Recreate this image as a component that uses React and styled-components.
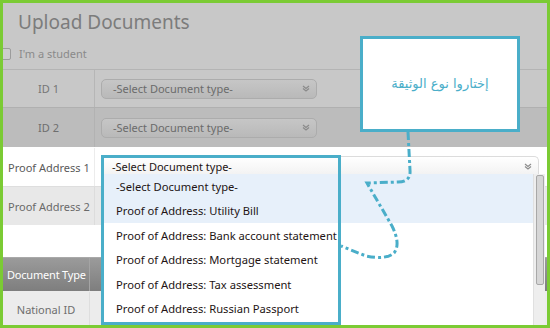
import React from 'react'
import styled, { createGlobalStyle } from 'styled-components'

const GlobalStyle = createGlobalStyle`
  html, body { margin: 0; padding: 0; background: #fff; }
  body { font-family: "Noto Sans", "DejaVu Sans", sans-serif; }
`

const Frame = styled.div`
  position: relative;
  width: 550px;
  height: 328px;
  box-sizing: border-box;
  border: 3px solid #7bcb34;
  overflow: hidden;
  background: #fff;
`

const Dimmed = styled.div`
  background: #c8c8c8;
`

const Title = styled.h1`
  margin: 0;
  padding: 7px 0 0 15px;
  height: 35px;
  box-sizing: border-box;
  font-size: 19px;
  font-weight: 400;
  color: #7c7c7c;
  line-height: 24px;
`

const StudentRow = styled.label`
  display: flex;
  align-items: center;
  gap: 8px;
  height: 31px;
  margin-left: -4px;
  font-size: 11px;
  color: #8a8a8a;
`

const Check = styled.span`
  width: 10px;
  height: 10px;
  border: 1px solid #9c9c9c;
  border-radius: 2px;
  background: #cdcdcd;
`

const Row = styled.div`
  display: flex;
  height: ${p => p.$h || 38}px;
  background: ${p => p.$bg};
  border-top: 1px solid ${p => p.$line || 'transparent'};
`

const LabelCell = styled.div`
  width: ${p => p.$w || 92}px;
  flex-shrink: 0;
  display: flex;
  align-items: center;
  justify-content: ${p => (p.$left ? 'flex-start' : 'center')};
  padding-left: ${p => (p.$left ? 5 : 0)}px;
  box-sizing: border-box;
  border-right: 1px solid ${p => p.$divider};
  font-size: 11px;
  color: ${p => p.$color};
`

const SelectCell = styled.div`
  flex: 1;
  display: flex;
  align-items: center;
  padding-left: 6px;
`

const DimSelect = styled.div`
  width: 216px;
  height: 20px;
  box-sizing: border-box;
  border: 1px solid #acacac;
  border-radius: 5px;
  background: linear-gradient(#c6c6c6, #b9b9b9);
  display: flex;
  align-items: center;
  justify-content: space-between;
  padding: 0 6px 0 11px;
  font-size: 11px;
  color: #6b6b6b;
`

const OpenSelect = styled.div`
  position: relative;
  top: -1px;
  width: 438px;
  height: 20px;
  box-sizing: border-box;
  border-top: 1px solid #dcdcdc;
  border-right: 1px solid #dcdcdc;
  border-bottom: 1px solid #d6d0c6;
  border-top-right-radius: 5px;
  background: linear-gradient(#fff, #f2f2f2);
  display: flex;
  align-items: center;
  justify-content: space-between;
  padding: 0 6px 0 11px;
  font-size: 11px;
  color: #231414;
`

const Spacer = styled.div`
  height: 32px;
`

const HeadRow = styled.div`
  display: flex;
  height: 33px;
  background: linear-gradient(#9b9b9b, #7e7e7e);
  border-top: 1px solid #a9a9a9;
`

const HeadCell = styled.div`
  width: 82px;
  border-right: 1px solid #a4a4a4;
  display: flex;
  align-items: center;
  padding-left: 4px;
  font-size: 11px;
  letter-spacing: -0.2px;
  color: #fff;
`

const List = styled.div`
  position: absolute;
  left: 99px;
  top: 171px;
  width: 443px;
  height: 160px;
  background: #fff;
  display: flex;
`

const Items = styled.div`
  flex: 1;
`

const Item = styled.div`
  height: 24.5px;
  display: flex;
  align-items: center;
  padding-left: 14px;
  font-size: 11.2px;
  color: #231414;
  background: ${p => (p.$hl ? '#e7f0fa' : '#fff')};
`

const Track = styled.div`
  width: 12px;
  background: #eeeeee;
  border-left: 1px solid #e0e0e0;
  padding: 1px 1px 0 2px;
  box-sizing: border-box;
`

const Thumb = styled.div`
  height: 110px;
  box-sizing: border-box;
  border: 1px solid #a8a8a8;
  border-radius: 2px;
  background: #d6d6d6;
`

const Highlight = styled.div`
  position: absolute;
  left: 98px;
  top: 152px;
  width: 240px;
  height: 170px;
  box-sizing: border-box;
  border: 3px solid #4aaec9;
`

const Callout = styled.div`
  position: absolute;
  left: 357px;
  top: 33px;
  width: 160px;
  height: 96px;
  box-sizing: border-box;
  border: 3px solid #4aaec9;
  background: #fff;
  display: flex;
  align-items: center;
  justify-content: center;
  padding-bottom: 2px;
  font-family: "DejaVu Sans", sans-serif;
  font-size: 13px;
  color: #4aaec9;
`

const Connector = styled.svg`
  position: absolute;
  left: -3px;
  top: -3px;
  pointer-events: none;
`

const Chevron = ({ color = '#8d8d8d' }) => (
  <svg width="8" height="7" viewBox="0 0 8 7">
    <polyline points="1,1 4,3.5 7,1" fill="none" stroke={color} strokeWidth="1.2" />
    <polyline points="1,3.5 4,6 7,3.5" fill="none" stroke={color} strokeWidth="1.2" />
  </svg>
)

const options = [
  '-Select Document type-',
  'Proof of Address: Utility Bill',
  'Proof of Address: Bank account statement',
  'Proof of Address: Mortgage statement',
  'Proof of Address: Tax assessment',
  'Proof of Address: Russian Passport',
]

export default function App() {
  return (
    <>
      <GlobalStyle />
      <Frame>
        <Dimmed>
          <Title>Upload Documents</Title>
          <StudentRow>
            <Check />
            I'm a student
          </StudentRow>
          <Row $bg="#c8c8c8" $line="#b4b4b4" $h={37}>
            <LabelCell $divider="#b6b6b6" $color="#767676">ID 1</LabelCell>
            <SelectCell>
              <DimSelect>-Select Document type-<Chevron color="#8a8a8a" /></DimSelect>
            </SelectCell>
          </Row>
          <Row $bg="#bcbcbc" $line="#b0b0b0" $h={39}>
            <LabelCell $divider="#b2b2b2" $color="#6e6e6e">ID 2</LabelCell>
            <SelectCell>
              <DimSelect>-Select Document type-<Chevron color="#8a8a8a" /></DimSelect>
            </SelectCell>
          </Row>
        </Dimmed>
        <Row $bg="#fff" $h={38}>
          <LabelCell $left $divider="#ececec" $color="#5a5a5a">Proof Address 1</LabelCell>
          <SelectCell>
            <OpenSelect>-Select Document type-<Chevron /></OpenSelect>
          </SelectCell>
        </Row>
        <Row $bg="#e8e8e8" $line="#dedede" $h={38}>
          <LabelCell $left $divider="#dcdcdc" $color="#6a6a6a">Proof Address 2</LabelCell>
        </Row>
        <Spacer />
        <HeadRow>
          <HeadCell>Document Type</HeadCell>
        </HeadRow>
        <Row $bg="#ececec" $h={35}>
          <LabelCell $w={87} $divider="#dedede" $color="#6e6e6e">National ID</LabelCell>
        </Row>

        <List>
          <Items>
            {options.map((o, i) => (
              <Item key={o} $hl={i < 2}>{o}</Item>
            ))}
          </Items>
          <Track>
            <Thumb />
          </Track>
        </List>

        <Highlight />

        <Callout>إختاروا نوع الوثيقة</Callout>

        <Connector width="550" height="328" viewBox="0 0 550 328">
          <path
            d="M408 132 L410 170 Q411 182 398 182 L367 183 L392 226 Q401 244 394 253 Q386 260 366 256 L341 246"
            fill="none"
            stroke="#4aaec9"
            strokeWidth="3"
            strokeDasharray="8 3 3 3"
          />
        </Connector>
      </Frame>
    </>
  )
}
